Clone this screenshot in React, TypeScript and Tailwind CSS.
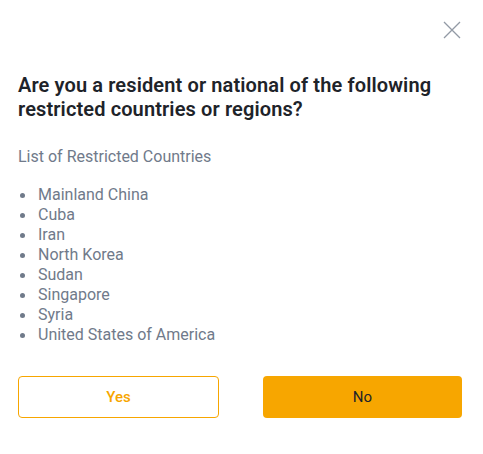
const COUNTRIES = [
  'Mainland China',
  'Cuba',
  'Iran',
  'North Korea',
  'Sudan',
  'Singapore',
  'Syria',
  'United States of America',
];

export default function App() {
  return (
    <div
      className="w-[483px] h-[454px] bg-white flex flex-col pl-[18px] pr-[21px] pt-[20px]"
      style={{ fontFamily: 'Roboto, "Noto Sans", sans-serif' }}
    >
      {/* Close */}
      <div className="flex justify-end">
        <button className="w-[20px] h-[20px] flex items-center justify-center text-[#929aa5]">
          <svg width="18" height="18" viewBox="0 0 18 18" fill="none" stroke="currentColor" strokeWidth="1.3">
            <path d="M1 1L17 17M17 1L1 17" />
          </svg>
        </button>
      </div>

      {/* Title */}
      <h2 className="mt-[33px] text-[20px] leading-[24px] font-semibold text-[#1e2329] tracking-[0.12px]">
        Are you a resident or national of the following restricted countries or regions?
      </h2>

      {/* List */}
      <p className="mt-[26px] text-[16px] leading-[20px] text-[#707a8a]">List of Restricted Countries</p>
      <ul className="mt-[18px] flex flex-col">
        {COUNTRIES.map(c => (
          <li key={c} className="flex items-center text-[16px] leading-[20px] text-[#707a8a]">
            <span className="w-[5px] h-[5px] rounded-full bg-[#707a8a] ml-[2px] mr-[13px]" />
            {c}
          </li>
        ))}
      </ul>

      {/* Actions */}
      <div className="mt-[31px] flex gap-[44px]">
        <button className="flex-1 h-[42px] rounded border border-[#f7a600] text-[#f7a600] text-[15px] font-medium">
          Yes
        </button>
        <button className="flex-1 h-[42px] rounded bg-[#f7a600] text-[#1e2329] text-[15px]">
          No
        </button>
      </div>
    </div>
  );
}
